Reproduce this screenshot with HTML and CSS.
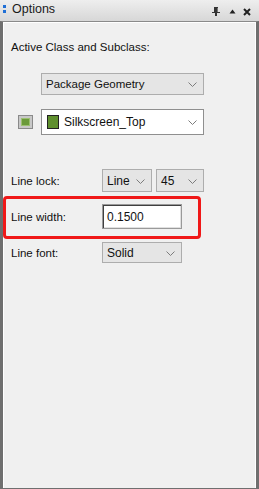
FILE: index.html
```html
<!DOCTYPE html>
<html>
<head>
<meta charset="utf-8">
<title>Options</title>
<link rel="stylesheet" href="styles.css">
</head>
<body>
<div class="window">
  <div class="titlebar">
    <span class="grip"><i></i><i></i></span>
    <span class="title">Options</span>
    <span class="tools">
      <svg class="pin" width="8" height="10" viewBox="0 0 8 10"><rect x="2" y="0" width="4" height="1" fill="#333"/><rect x="2" y="1" width="3" height="4" fill="#333"/><rect x="5" y="1" width="1" height="4" fill="#777"/><rect x="0" y="5" width="8" height="1" fill="#333"/><rect x="3" y="6" width="2" height="3" fill="#333"/></svg>
      <svg class="up" width="7" height="5" viewBox="0 0 7 5"><path d="M3.5 0.5 L6.5 4.5 L0.5 4.5 Z" fill="#222"/></svg>
      <svg class="close" width="8" height="8" viewBox="0 0 8 8"><path d="M1 1 L7 7 M7 1 L1 7" stroke="#222" stroke-width="2"/></svg>
    </span>
  </div>
  <div class="panel">
    <div class="heading">Active Class and Subclass:</div>
    <div class="row class-row">
      <div class="select grey wide">
        <span class="val">Package Geometry</span>
        <svg class="chev" width="9" height="5" viewBox="0 0 9 5"><path d="M0.5 0.5 L4.5 4.5 L8.5 0.5" fill="none" stroke="#7c7c7c" stroke-width="1"/></svg>
      </div>
    </div>
    <div class="row sub-row">
      <span class="colorbtn"><span class="swatch"></span></span>
      <div class="select white wide tall">
        <span class="chip"></span>
        <span class="val">Silkscreen_Top</span>
        <svg class="chev" width="9" height="5" viewBox="0 0 9 5"><path d="M0.5 0.5 L4.5 4.5 L8.5 0.5" fill="none" stroke="#7c7c7c" stroke-width="1"/></svg>
      </div>
    </div>
    <div class="row field lock-row">
      <span class="label">Line lock:</span>
      <div class="select grey line-sel">
        <span class="val">Line</span>
        <svg class="chev" width="9" height="5" viewBox="0 0 9 5"><path d="M0.5 0.5 L4.5 4.5 L8.5 0.5" fill="none" stroke="#7c7c7c" stroke-width="1"/></svg>
      </div>
      <div class="select grey angle-sel">
        <span class="val">45</span>
        <svg class="chev" width="9" height="5" viewBox="0 0 9 5"><path d="M0.5 0.5 L4.5 4.5 L8.5 0.5" fill="none" stroke="#7c7c7c" stroke-width="1"/></svg>
      </div>
    </div>
    <div class="row field highlight">
      <span class="label">Line width:</span>
      <div class="input"><span class="val">0.1500</span></div>
    </div>
    <div class="row field font-row">
      <span class="label">Line font:</span>
      <div class="select grey font-sel">
        <span class="val">Solid</span>
        <svg class="chev" width="9" height="5" viewBox="0 0 9 5"><path d="M0.5 0.5 L4.5 4.5 L8.5 0.5" fill="none" stroke="#7c7c7c" stroke-width="1"/></svg>
      </div>
    </div>
  </div>
</div>
</body>
</html>
```
FILE: styles.css
```css
html, body {
  margin: 0;
  padding: 0;
  background: #f0f0f0;
}
body {
  font-family: "Liberation Sans", Arial, sans-serif;
  font-size: 11.5px;
  color: #111;
}
.window {
  width: 259px;
  height: 489px;
  display: flex;
  flex-direction: column;
  box-sizing: border-box;
}
.titlebar {
  height: 21px;
  flex: none;
  display: flex;
  align-items: center;
  background: linear-gradient(#eeeeee, #d7d7d7);
  box-sizing: border-box;
  padding-left: 3px;
}
.grip {
  display: flex;
  flex-direction: column;
  gap: 2px;
  width: 3px;
  margin-top: -4px;
}
.grip i {
  display: block;
  width: 3px;
  height: 3px;
  background: #1f6fd6;
}
.title {
  margin-left: 6px;
  font-size: 12.5px;
  color: #1a1a1a;
  margin-top: -4px;
}
.tools {
  margin-left: auto;
  display: flex;
  align-items: center;
  margin-right: 8px;
  margin-top: 2px;
}
.pin { margin-right: 9px; }
.up { margin-right: 7px; margin-top: -1px; }
.panel {
  flex: 1;
  border-left: 3px solid #6f6f6f;
  border-right: 3px solid #6f6f6f;
  border-top: 1px solid #8a8a8a;
  border-bottom: 1px solid #6f6f6f;
  box-shadow: inset 1px 1px 0 #ffffff, inset -1px 0 0 #ffffff;
  background: #f0f0f0;
  display: flex;
  flex-direction: column;
}
.heading {
  margin-top: 18px;
  padding-left: 8px;
  line-height: 14px;
}
.row {
  display: flex;
  align-items: center;
}
.class-row {
  margin-top: 19px;
  padding-left: 38px;
}
.sub-row {
  margin-top: 14px;
  padding-left: 15px;
}
.field { padding-left: 8px; }
.label {
  width: 91px;
  flex: none;
}
.lock-row { margin-top: 34px; }
.highlight {
  margin-top: 4px;
  width: 198px;
  height: 43px;
  box-sizing: border-box;
  border: 3px solid #f01818;
  border-radius: 4px;
  padding-left: 5px;
  padding-bottom: 2px;
}
.font-row { margin-top: 3px; }
.select {
  position: relative;
  display: flex;
  align-items: center;
  box-sizing: border-box;
  border: 1px solid #adadad;
  padding-left: 4px;
}
.select .chev {
  position: absolute;
  right: 6px;
  top: 50%;
  margin-top: -2px;
}
.grey { background: #e5e5e5; }
.white { background: #ffffff; border-color: #8f8f8f; }
.wide { width: 163px; height: 22px; }
.tall { height: 26px; padding-left: 5px; font-size: 12px; }
.line-sel { width: 50px; height: 23px; font-size: 12px; }
.angle-sel { width: 48px; height: 23px; margin-left: 4px; font-size: 12px; }
.font-sel { width: 80px; height: 21px; font-size: 12px; }
.chip {
  width: 12px;
  height: 14px;
  box-sizing: border-box;
  background: #5f8f2e;
  border: 1px solid #222;
  margin-right: 5px;
}
.colorbtn {
  width: 15px;
  height: 14px;
  box-sizing: border-box;
  border: 1px solid #8a8a8a;
  background: #c8c8c8;
  padding: 2px;
  margin-right: 8px;
  display: flex;
}
.swatch {
  flex: 1;
  background: #6b9a3a;
  box-shadow: inset 0 0 0 1px #9cc070;
}
.input {
  width: 80px;
  height: 25px;
  box-sizing: border-box;
  background: #fff;
  border: 1px solid #9a9a9a;
  box-shadow: inset 1px 1px 0 #404040, inset -1px -1px 0 #e0e0e0;
  display: flex;
  align-items: center;
  padding-left: 4px;
  font-size: 12px;
}
```
